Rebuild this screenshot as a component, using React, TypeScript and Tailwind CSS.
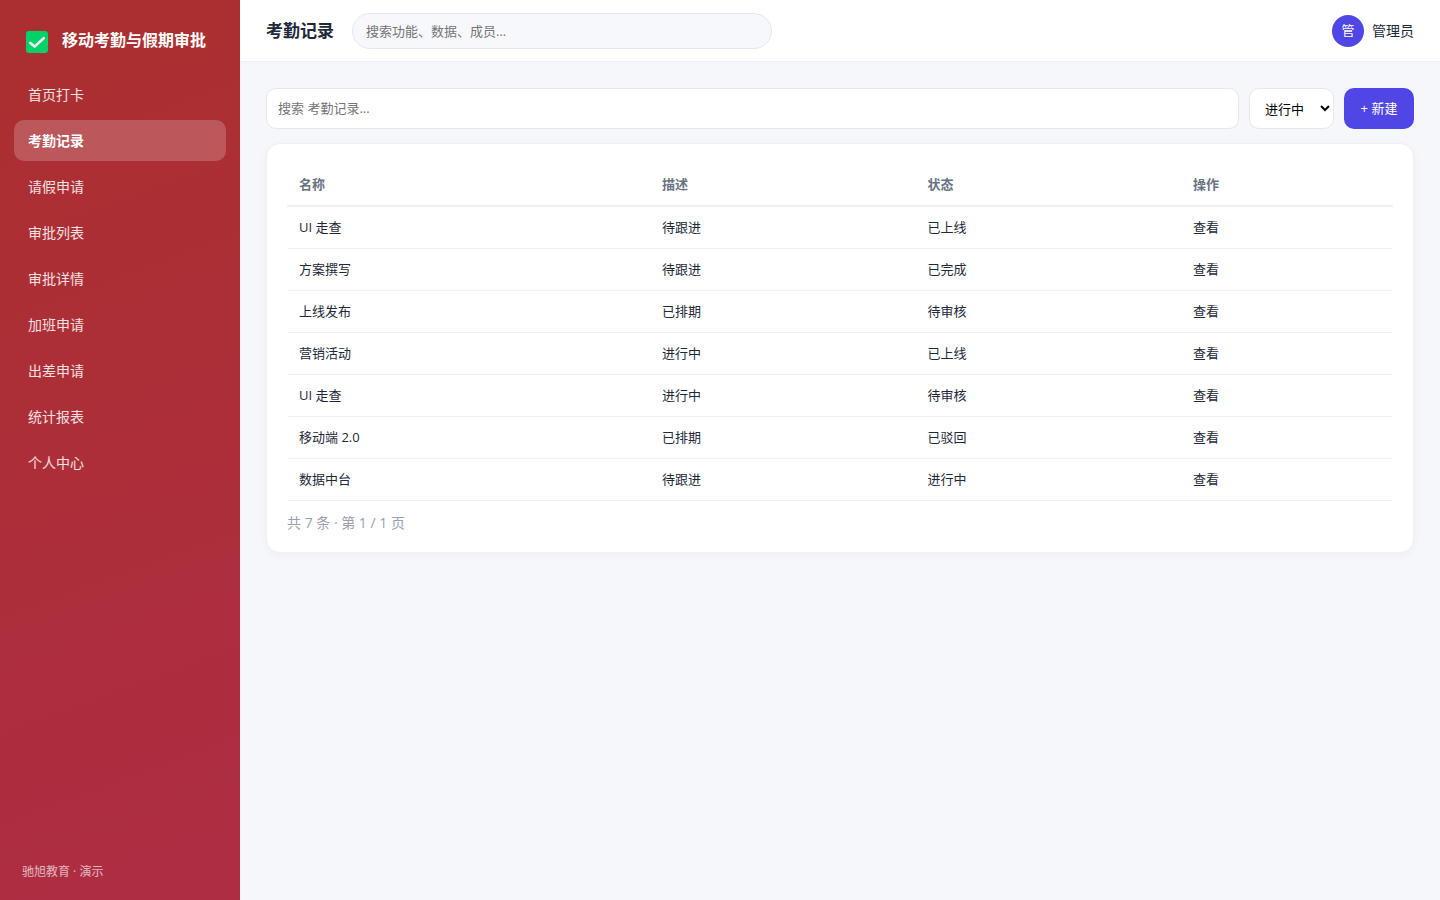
import React from 'react';

const navItems = ['首页打卡', '考勤记录', '请假申请', '审批列表', '审批详情', '加班申请', '出差申请', '统计报表', '个人中心'];

const columns = [
  { title: '名称', width: 'w-[363px]' },
  { title: '描述', width: 'w-[24%]' },
  { title: '状态', width: 'w-[24%]' },
  { title: '操作', width: 'w-auto' },
];

const records = [
  { name: 'UI 走查', desc: '待跟进', status: '已上线' },
  { name: '方案撰写', desc: '待跟进', status: '已完成' },
  { name: '上线发布', desc: '已排期', status: '待审核' },
  { name: '营销活动', desc: '进行中', status: '已上线' },
  { name: 'UI 走查', desc: '进行中', status: '待审核' },
  { name: '移动端 2.0', desc: '已排期', status: '已驳回' },
  { name: '数据中台', desc: '待跟进', status: '进行中' },
];

const CheckLogo: React.FC = () => (
  <svg className="h-[26px] w-[22px] shrink-0" viewBox="0 -4 22 26" aria-hidden="true">
    <rect width="22" height="22" rx="3" fill="#00d26a" />
    <path d="M4.3 11.9 L8.6 15.6 L17.7 7.2" fill="none" stroke="#f4f4f4" strokeWidth="2.6" strokeLinecap="round" strokeLinejoin="round" />
  </svg>
);

const Sidebar: React.FC = () => (
  <aside className="flex w-60 shrink-0 flex-col bg-[linear-gradient(160deg,#ab2f2f,#ae2d43)] px-[14px] pt-5 pb-4 text-white">
    <div className="mb-[14px] flex h-10 items-center gap-[14px] px-3 text-base font-bold whitespace-nowrap">
      <CheckLogo />
      <span>移动考勤与假期审批</span>
    </div>
    <nav className="flex flex-col gap-[5px]">
      {navItems.map((item) => (
        <a
          key={item}
          href="#"
          className={
            item === '考勤记录'
              ? 'flex h-[41px] items-center rounded-[10px] bg-white/20 px-[14px] text-sm font-bold'
              : 'flex h-[41px] items-center rounded-[10px] px-[14px] text-sm text-white/85'
          }
        >
          {item}
        </a>
      ))}
    </nav>
    <div className="mt-auto px-2 text-xs leading-6 text-white/65">驰旭教育 · 演示</div>
  </aside>
);

const Header: React.FC = () => (
  <header className="flex h-[62px] items-center gap-[18px] border-b border-[#eef0f5] bg-white px-[26px]">
    <h1 className="text-[17px] font-bold">考勤记录</h1>
    <input
      type="search"
      aria-label="全局搜索"
      placeholder="搜索功能、数据、成员…"
      className="h-9 w-[420px] rounded-full border border-[#e5e7f0] bg-[#f7f8fc] px-[13px] text-[13px] placeholder:text-[#757575]"
    />
    <div className="ml-auto flex items-center gap-2 text-sm">
      <div className="flex h-8 w-8 items-center justify-center rounded-full bg-[#4f46e5] text-[13px] text-white">管</div>
      <span>管理员</span>
    </div>
  </header>
);

const Toolbar: React.FC = () => (
  <div className="mb-[14px] flex h-[41px] gap-[10px] text-[13px]">
    <input
      type="search"
      aria-label="搜索考勤记录"
      placeholder="搜索 考勤记录..."
      className="min-w-0 flex-1 rounded-[10px] border border-[#e5e7f0] bg-white px-[11px] placeholder:text-[#757575]"
    />
    <select aria-label="状态" className="w-[85px] rounded-[10px] border border-[#e5e7f0] bg-white px-[11px] text-black">
      <option>进行中</option>
      <option>已完成</option>
    </select>
    <button type="button" className="w-[70px] rounded-[10px] bg-[#4f46e5] text-white">+ 新建</button>
  </div>
);

const RecordTable: React.FC = () => (
  <section className="rounded-[14px] border border-[#eef0f5] bg-white p-5 shadow-[0_2px_8px_rgba(30,41,80,0.04)]">
    <table className="w-full table-fixed border-separate border-spacing-0 text-left text-[13px]">
      <thead>
        <tr>
          {columns.map((col) => (
            <th key={col.title} className={`${col.width} h-[43px] border-b-2 border-[#eef0f5] px-3 font-bold text-gray-500`}>
              {col.title}
            </th>
          ))}
        </tr>
      </thead>
      <tbody>
        {records.map((row, i) => (
          <tr key={i}>
            <td className="h-[42px] border-b border-[#eef0f5] px-3">{row.name}</td>
            <td className="h-[42px] border-b border-[#eef0f5] px-3">{row.desc}</td>
            <td className="h-[42px] border-b border-[#eef0f5] px-3">{row.status}</td>
            <td className="h-[42px] border-b border-[#eef0f5] px-3">
              <a href="#">查看</a>
            </td>
          </tr>
        ))}
      </tbody>
    </table>
    <p className="pt-3 text-sm leading-[19px] text-gray-400">共 7 条 · 第 1 / 1 页</p>
  </section>
);

export default function App() {
  return (
    <div className="flex min-h-screen bg-[#f5f7fb] font-['Open_Sans','Noto_Sans_CJK_SC',sans-serif] text-gray-800">
      <Sidebar />
      <div className="min-w-0 flex-1">
        <Header />
        <main className="p-[26px]">
          <Toolbar />
          <RecordTable />
        </main>
      </div>
    </div>
  );
}
